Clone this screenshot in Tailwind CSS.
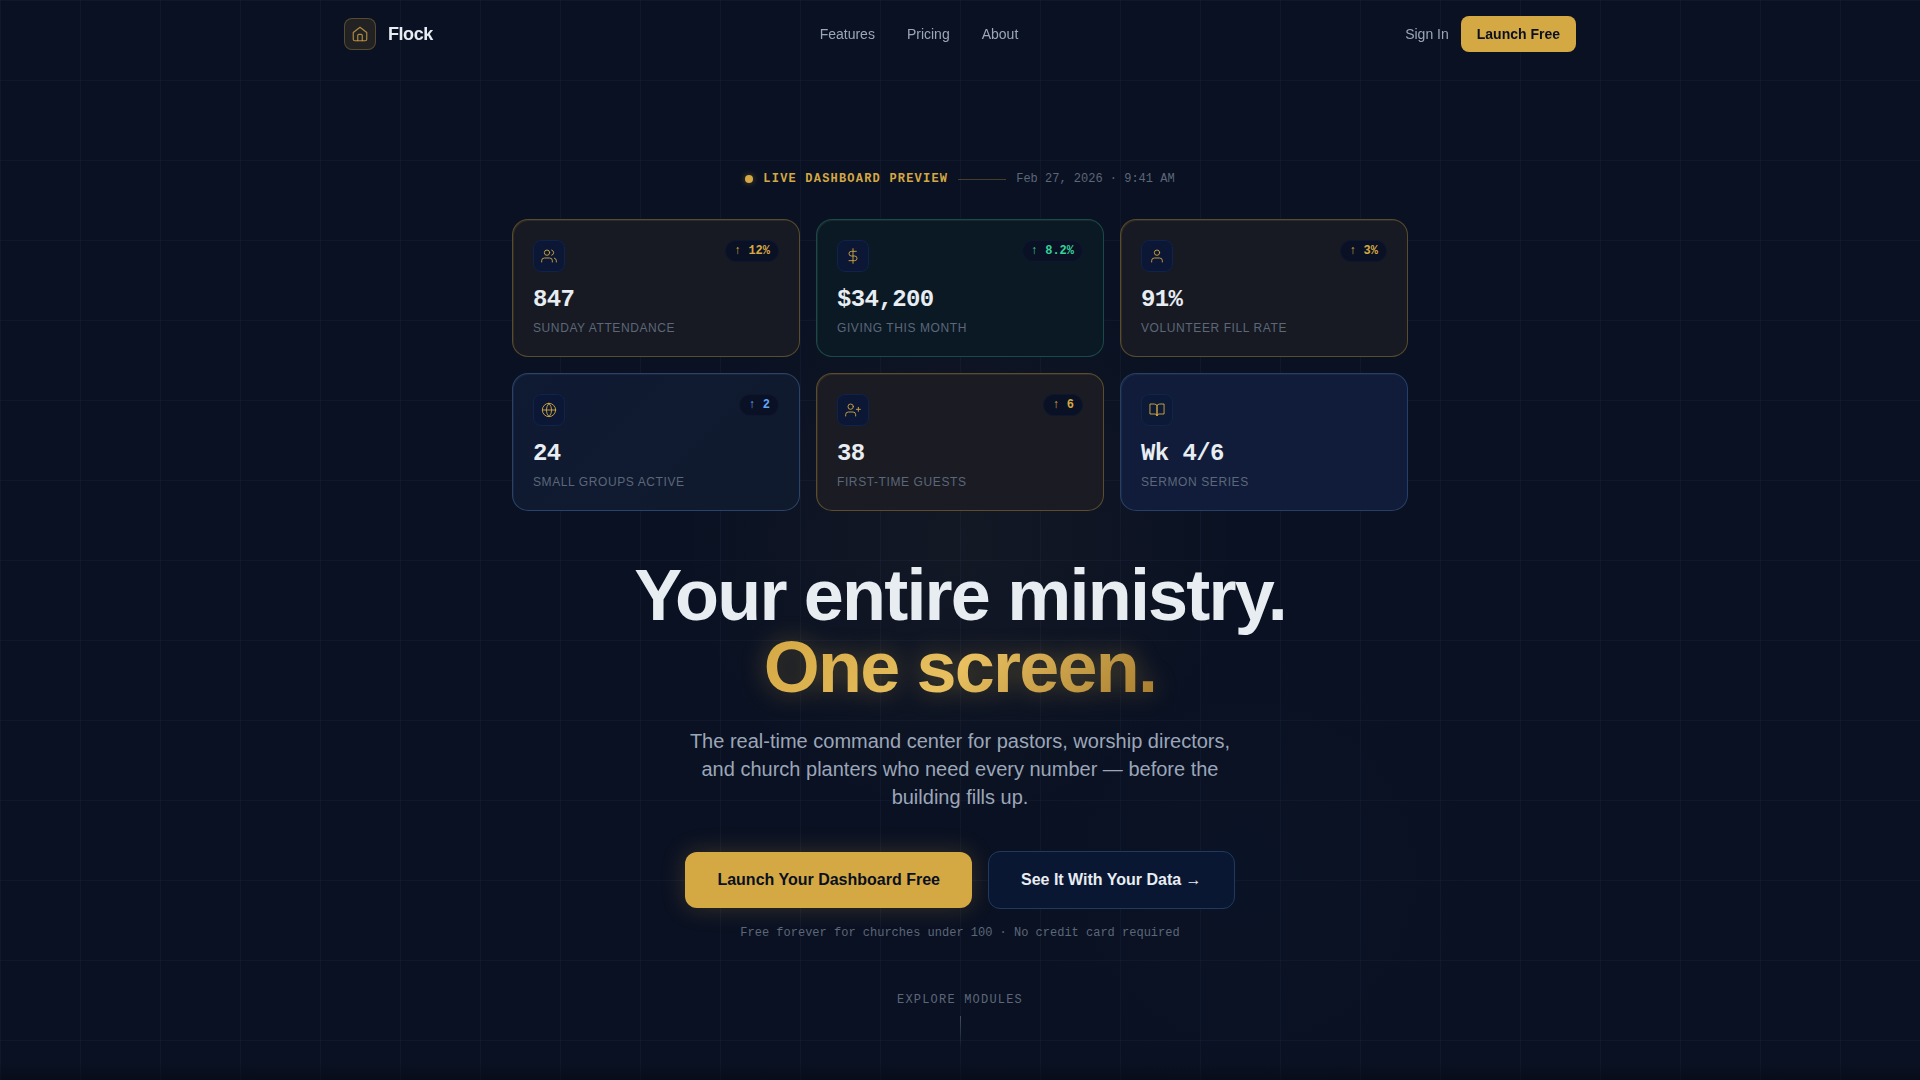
<!DOCTYPE html>
<html lang="en">
<head>
  <meta charset="UTF-8" />
  <meta name="viewport" content="width=device-width, initial-scale=1.0"/>
  <title>Flock - Your entire ministry. One screen.</title>
  <script src="https://cdn.jsdelivr.net/npm/@tailwindcss/browser@4"></script>
</head>
<body class="bg-[#0a1122] font-['Liberation_Sans',Arial,sans-serif] text-[#e8edf2]">

  <!-- Nav -->
  <header class="fixed inset-x-0 top-0 z-20">
    <nav class="max-w-7xl mx-auto px-6 py-4 flex items-center justify-between">
      <a href="#" class="flex items-center gap-3">
        <span class="w-8 h-8 rounded-lg border border-[#d4a843]/30 bg-[#d4a843]/12 flex items-center justify-center text-[#d4a843]/80">
          <svg class="w-[18px] h-[18px]" viewBox="0 0 24 24" fill="none" stroke="currentColor" stroke-width="1.5" stroke-linecap="round" stroke-linejoin="round"><path d="M3 10l9-7 9 7v9a2 2 0 0 1-2 2H5a2 2 0 0 1-2-2z"/><path d="M9 21v-7a1.5 1.5 0 0 1 1.5-1.5h3A1.5 1.5 0 0 1 15 14v7"/></svg>
        </span>
        <span class="text-lg font-bold tracking-tight">Flock</span>
      </a>
      <div class="flex items-center gap-8 text-sm text-[#9ba6b8]">
        <a href="#features" class="hover:text-white">Features</a>
        <a href="#pricing" class="hover:text-white">Pricing</a>
        <a href="#about" class="hover:text-white">About</a>
      </div>
      <div class="flex items-center gap-3">
        <a href="#signin" class="text-sm text-[#9ba6b8] hover:text-white">Sign In</a>
        <button type="button" class="px-4 py-2 rounded-lg bg-[#d4a843] text-sm font-semibold text-[#0a1020]">Launch Free</button>
      </div>
    </nav>
  </header>

  <!-- Hero: glows on top of an 80px grid -->
  <main class="min-h-screen px-6 pt-30 pb-8 flex flex-col items-center bg-[radial-gradient(circle_at_50%_50%,rgba(180,160,80,0.05),transparent_280px),radial-gradient(circle_at_65%_81%,rgba(10,30,60,0.12),transparent_220px),linear-gradient(to_bottom,transparent_calc(100%-16px),rgba(4,8,18,0.5)),linear-gradient(rgba(80,95,140,0.09)_1px,transparent_1px),linear-gradient(90deg,rgba(80,95,140,0.09)_1px,transparent_1px)] bg-[size:auto,auto,auto,80px_80px,80px_80px]">
    <div class="my-auto w-full max-w-4xl flex flex-col items-center">

      <div class="mb-8 flex items-center gap-[10px] font-['Liberation_Mono',monospace] text-xs">
        <span class="w-2 h-2 rounded-full bg-[#d4a843] shadow-[0_0_6px_rgba(212,168,67,0.4)]"></span>
        <span class="font-bold tracking-widest text-[#d4a843]">LIVE DASHBOARD PREVIEW</span>
        <span class="w-12 h-px bg-[#d4a843]/30"></span>
        <span class="text-[#5c6779]">Feb 27, 2026 · 9:41 AM</span>
      </div>

      <section class="w-full grid grid-cols-3 gap-4">
        <article class="p-5 rounded-2xl border border-[#d4a843]/35 bg-[#171a22] shadow-[inset_1px_1px_0_rgba(212,168,67,0.12)]">
          <div class="mb-3 flex items-start justify-between">
            <span class="w-8 h-8 rounded-lg border border-[#10234a] bg-[#0b1735] flex items-center justify-center text-[#d4a843]/90">
              <svg class="w-4 h-4" viewBox="0 0 24 24" fill="none" stroke="currentColor" stroke-width="1.5" stroke-linecap="round" stroke-linejoin="round"><path d="M17 21v-2a4 4 0 0 0-4-4H5a4 4 0 0 0-4 4v2"/><circle cx="9" cy="7" r="4"/><path d="M23 21v-2a4 4 0 0 0-3-3.87"/><path d="M16 3.13a4 4 0 0 1 0 7.75"/></svg>
            </span>
            <span class="px-2 py-0.5 rounded-full border border-[#0d1730] bg-[#0a1124] font-['Liberation_Mono',monospace] text-xs font-bold text-[#d4a843]">↑ 12%</span>
          </div>
          <p class="mb-1 font-['Liberation_Mono',monospace] text-2xl font-bold tracking-tight">847</p>
          <p class="text-xs tracking-wider text-[#5c6779]">SUNDAY ATTENDANCE</p>
        </article>

        <article class="p-5 rounded-2xl border border-[#34a58c]/35 bg-[#0b1925] shadow-[inset_1px_1px_0_rgba(120,160,110,0.12)]">
          <div class="mb-3 flex items-start justify-between">
            <span class="w-8 h-8 rounded-lg border border-[#10234a] bg-[#0b1735] flex items-center justify-center text-[#d4a843]/90">
              <svg class="w-4 h-4" viewBox="0 0 24 24" fill="none" stroke="currentColor" stroke-width="1.5" stroke-linecap="round" stroke-linejoin="round"><path d="M12 1v22"/><path d="M17 5H9.500a3.500 3.500 0 0 0 0 7h5a3.500 3.500 0 0 1 0 7H6"/></svg>
            </span>
            <span class="px-2 py-0.5 rounded-full border border-[#0d1730] bg-[#0a1124] font-['Liberation_Mono',monospace] text-xs font-bold text-[#34d399]">↑ 8.2%</span>
          </div>
          <p class="mb-1 font-['Liberation_Mono',monospace] text-2xl font-bold tracking-tight">$34,200</p>
          <p class="text-xs tracking-wider text-[#5c6779]">GIVING THIS MONTH</p>
        </article>

        <article class="p-5 rounded-2xl border border-[#d4a843]/35 bg-[#171a22] shadow-[inset_1px_1px_0_rgba(212,168,67,0.12)]">
          <div class="mb-3 flex items-start justify-between">
            <span class="w-8 h-8 rounded-lg border border-[#10234a] bg-[#0b1735] flex items-center justify-center text-[#d4a843]/90">
              <svg class="w-4 h-4" viewBox="0 0 24 24" fill="none" stroke="currentColor" stroke-width="1.5" stroke-linecap="round" stroke-linejoin="round"><path d="M20 21v-2a4 4 0 0 0-4-4H8a4 4 0 0 0-4 4v2"/><circle cx="12" cy="7" r="4"/></svg>
            </span>
            <span class="px-2 py-0.5 rounded-full border border-[#0d1730] bg-[#0a1124] font-['Liberation_Mono',monospace] text-xs font-bold text-[#d4a843]">↑ 3%</span>
          </div>
          <p class="mb-1 font-['Liberation_Mono',monospace] text-2xl font-bold tracking-tight">91%</p>
          <p class="text-xs tracking-wider text-[#5c6779]">VOLUNTEER FILL RATE</p>
        </article>

        <article class="p-5 rounded-2xl border border-[#5082be]/40 bg-linear-135 from-[#0f1a33] to-[#101a2d] shadow-[inset_1px_1px_0_rgba(160,170,180,0.08)]">
          <div class="mb-3 flex items-start justify-between">
            <span class="w-8 h-8 rounded-lg border border-[#10234a] bg-[#0b1735] flex items-center justify-center text-[#d4a843]/90">
              <svg class="w-4 h-4" viewBox="0 0 24 24" fill="none" stroke="currentColor" stroke-width="1.5" stroke-linecap="round" stroke-linejoin="round"><circle cx="12" cy="12" r="10"/><path d="M2 12h20"/><path d="M12 2a15.300 15.300 0 0 1 4 10 15.300 15.300 0 0 1-4 10 15.300 15.300 0 0 1-4-10 15.300 15.300 0 0 1 4-10z"/></svg>
            </span>
            <span class="px-2 py-0.5 rounded-full border border-[#0d1730] bg-[#0a1124] font-['Liberation_Mono',monospace] text-xs font-bold text-[#60a5fa]">↑ 2</span>
          </div>
          <p class="mb-1 font-['Liberation_Mono',monospace] text-2xl font-bold tracking-tight">24</p>
          <p class="text-xs tracking-wider text-[#5c6779]">SMALL GROUPS ACTIVE</p>
        </article>

        <article class="p-5 rounded-2xl border border-[#d4a843]/35 bg-[#1a1b23] shadow-[inset_1px_1px_0_rgba(212,168,67,0.12)]">
          <div class="mb-3 flex items-start justify-between">
            <span class="w-8 h-8 rounded-lg border border-[#10234a] bg-[#0b1735] flex items-center justify-center text-[#d4a843]/90">
              <svg class="w-4 h-4" viewBox="0 0 24 24" fill="none" stroke="currentColor" stroke-width="1.5" stroke-linecap="round" stroke-linejoin="round"><path d="M16 21v-2a4 4 0 0 0-4-4H5a4 4 0 0 0-4 4v2"/><circle cx="8.500" cy="7" r="4"/><path d="M20 8v6"/><path d="M23 11h-6"/></svg>
            </span>
            <span class="px-2 py-0.5 rounded-full border border-[#0d1730] bg-[#0a1124] font-['Liberation_Mono',monospace] text-xs font-bold text-[#d4a843]">↑ 6</span>
          </div>
          <p class="mb-1 font-['Liberation_Mono',monospace] text-2xl font-bold tracking-tight">38</p>
          <p class="text-xs tracking-wider text-[#5c6779]">FIRST-TIME GUESTS</p>
        </article>

        <article class="p-5 rounded-2xl border border-[#5082be]/35 bg-[#101c3a] shadow-[inset_1px_1px_0_rgba(160,170,180,0.08)]">
          <div class="mb-3 flex items-start justify-between">
            <span class="w-8 h-8 rounded-lg border border-[#13244a] bg-[#0d1a37] flex items-center justify-center text-[#d4a843]/90">
              <svg class="w-4 h-4" viewBox="0 0 24 24" fill="none" stroke="currentColor" stroke-width="1.5" stroke-linecap="round" stroke-linejoin="round"><path d="M2 3h6a4 4 0 0 1 4 4v14a3 3 0 0 0-3-3H2z"/><path d="M22 3h-6a4 4 0 0 0-4 4v14a3 3 0 0 1 3-3h7z"/></svg>
            </span>
          </div>
          <p class="mb-1 font-['Liberation_Mono',monospace] text-2xl font-bold tracking-tight">Wk 4/6</p>
          <p class="text-xs tracking-wider text-[#5c6779]">SERMON SERIES</p>
        </article>
      </section>

      <h1 class="mt-12 text-center text-7xl leading-none font-bold tracking-tight">
        Your entire ministry.<br/>
        <span class="inline-block bg-linear-135 from-[#d4a843] via-[#e8c060] to-[#a67c2e] bg-clip-text text-transparent drop-shadow-[0_0_12px_rgba(212,168,67,0.35)]">One screen.</span>
      </h1>

      <p class="mt-6 max-w-xl text-center text-xl leading-7 text-[#9ba6b8]">
        The real-time command center for pastors, worship directors, and church planters who need every number — before the building fills up.
      </p>

      <div class="mt-10 flex items-center gap-4">
        <button type="button" class="px-8 py-4 rounded-xl bg-[#d4a843] font-semibold text-[#0a1020] shadow-[0_0_24px_rgba(212,168,67,0.22)]">Launch Your Dashboard Free</button>
        <button type="button" class="px-8 py-4 rounded-xl border border-[#1f3a5c] bg-[#0a1733] font-semibold">See It With Your Data →</button>
      </div>

      <p class="mt-4 font-['Liberation_Mono',monospace] text-xs text-[#5c6779]">Free forever for churches under 100 · No credit card required</p>
    </div>

    <div class="flex flex-col items-center gap-2">
      <span class="font-['Liberation_Mono',monospace] text-xs tracking-widest text-[#5c6779]">EXPLORE MODULES</span>
      <span class="w-px h-8 bg-linear-to-b from-[#5c6779]/70 to-transparent"></span>
    </div>
  </main>

</body>
</html>
